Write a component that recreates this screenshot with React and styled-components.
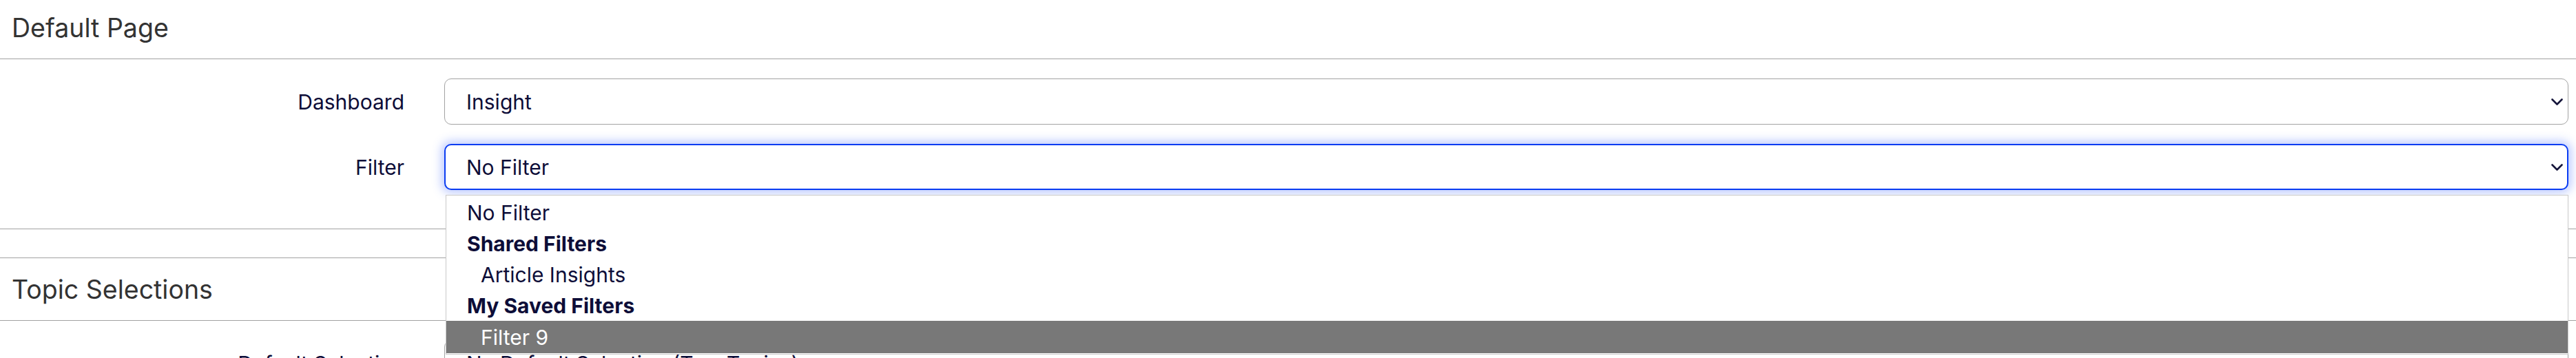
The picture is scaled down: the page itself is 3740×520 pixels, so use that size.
import React from "react";
import styled, { createGlobalStyle, css } from "styled-components";

const GlobalStyle = createGlobalStyle`
  html, body {
    margin: 0;
    padding: 0;
    background: #ffffff;
  }
  body {
    font-family: Inter, "Noto Sans", "Liberation Sans", sans-serif;
    overflow: hidden;
  }
`;

const Page = styled.div`
  width: 3740px;
  margin-top: -6px;
  display: flex;
  flex-direction: column;
  gap: 41px;
`;

const Card = styled.section`
  border-top: 1px solid #a2a2a2;
  border-bottom: 1px solid #a2a2a2;
`;

const CardHeader = styled.div`
  height: 90px;
  display: flex;
  align-items: center;
  padding-left: 17px;
  border-bottom: 1px solid #a2a2a2;
`;

const Title = styled.h2`
  margin: 0;
  font-size: 37.5px;
  font-weight: 400;
  color: #333333;
`;

const CardBody = styled.div`
  padding: 28px 11px 56px 0;
  display: flex;
  flex-direction: column;
  gap: 28px;
`;

const Row = styled.div`
  display: grid;
  grid-template-columns: 587px 1fr;
  column-gap: 58px;
  align-items: center;
`;

const Label = styled.label`
  text-align: right;
  font-size: 30px;
  color: #0d0d38;
`;

const SelectWrap = styled.div`
  position: relative;
`;

const SelectBox = styled.div`
  box-sizing: border-box;
  height: 67px;
  display: flex;
  align-items: center;
  justify-content: space-between;
  padding: 0 7px 0 31px;
  border: 1px solid #a3a3a3;
  border-radius: 10px;
  background: #ffffff;
  font-size: 30px;
  color: #0d0d38;
  ${(p) =>
    p.$focused &&
    css`
      border: 2px solid #0a3cf2;
      padding-left: 30px;
      padding-right: 6px;
      box-shadow: 0 0 14px 4px rgba(60, 100, 255, 0.35);
    `}
`;

const Chevron = () => (
  <svg width="17" height="10" viewBox="0 0 17 10" fill="none">
    <path
      d="M1.5 1.5l7 7 7-7"
      stroke="#15153a"
      strokeWidth="2.6"
      strokeLinecap="round"
      strokeLinejoin="round"
    />
  </svg>
);

const Dropdown = styled.ul`
  position: absolute;
  top: calc(100% + 7px);
  left: 2px;
  right: 0;
  margin: 0;
  padding: 2px 0 1px;
  list-style: none;
  background: #ffffff;
  border: 1px solid #c9c9c9;
  z-index: 5;
`;

const Option = styled.li`
  height: 45px;
  display: flex;
  align-items: center;
  padding-left: ${(p) => (p.$nested ? "50px" : "30px")};
  font-size: 30px;
  font-weight: ${(p) => (p.$group ? 700 : 400)};
  color: ${(p) => (p.$active ? "#ffffff" : "#0d0d38")};
  background: ${(p) => (p.$active ? "#787878" : "transparent")};
  ${(p) => p.$active && css`height: 47px;`}
`;

const Select = ({ value, focused, children }) => (
  <SelectWrap>
    <SelectBox $focused={focused}>
      <span>{value}</span>
      <Chevron />
    </SelectBox>
    {children}
  </SelectWrap>
);

const filterOptions = [
  { text: "No Filter" },
  { text: "Shared Filters", group: true },
  { text: "Article Insights", nested: true },
  { text: "My Saved Filters", group: true },
  { text: "Filter 9", nested: true, active: true },
];

export default function App() {
  return (
    <>
      <GlobalStyle />
      <Page>
        <Card>
          <CardHeader>
            <Title>Default Page</Title>
          </CardHeader>
          <CardBody>
            <Row>
              <Label>Dashboard</Label>
              <Select value="Insight" />
            </Row>
            <Row>
              <Label>Filter</Label>
              <Select value="No Filter" focused>
                <Dropdown>
                  {filterOptions.map((o) => (
                    <Option
                      key={o.text}
                      $group={o.group}
                      $nested={o.nested}
                      $active={o.active}
                    >
                      {o.text}
                    </Option>
                  ))}
                </Dropdown>
              </Select>
            </Row>
          </CardBody>
        </Card>
        <Card>
          <CardHeader>
            <Title>Topic Selections</Title>
          </CardHeader>
          <CardBody>
            <Row>
              <Label>Default Selection</Label>
              <Select value="No Default Selection (Two Topics)" />
            </Row>
          </CardBody>
        </Card>
      </Page>
    </>
  );
}
